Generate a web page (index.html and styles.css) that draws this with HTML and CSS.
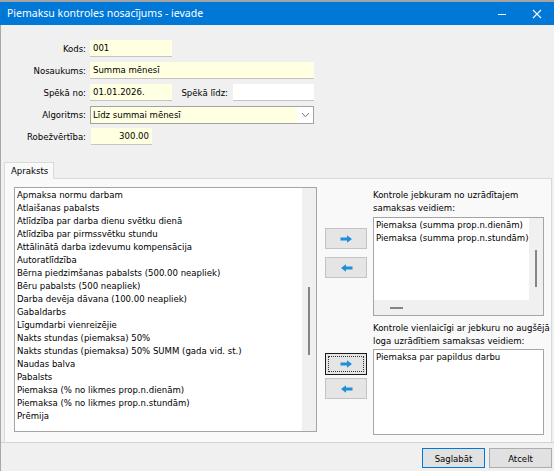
FILE: index.html
```html
<!DOCTYPE html>
<html lang="lv">
<head>
<meta charset="utf-8">
<title>Piemaksu kontroles nosacījums - ievade</title>
<link rel="stylesheet" href="styles.css">
</head>
<body>
<div class="window">
  <div class="titlebar">
    <span class="title">Piemaksu kontroles nosacījums - ievade</span>
    <span class="tb-btn"><svg width="10" height="10" viewBox="0 0 10 10"><path d="M1 5.5H9" stroke="#fff" stroke-width="1"/></svg></span>
    <span class="tb-btn"><svg width="10" height="10" viewBox="0 0 10 10"><path d="M1 1L9 9M9 1L1 9" stroke="#fff" stroke-width="1.1"/></svg></span>
  </div>
  <div class="client">
    <div class="form">
      <div class="lbl">Kods:</div>
      <div class="field"><span class="inp w82">001</span></div>

      <div class="lbl">Nosaukums:</div>
      <div class="field"><span class="inp wfull">Summa mēnesī</span></div>

      <div class="lbl">Spēkā no:</div>
      <div class="field">
        <span class="inp w82">01.01.2026.</span>
        <span class="lbl2">Spēkā līdz:</span>
        <span class="inp w81 white"></span>
      </div>

      <div class="lbl">Algoritms:</div>
      <div class="field">
        <span class="select">
          <span class="sel-text">Līdz summai mēnesī</span>
          <span class="sel-arrow"><svg width="9" height="6" viewBox="0 0 9 6"><path d="M1 1.2L4.5 4.6L8 1.2" fill="none" stroke="#6d6d6d" stroke-width="1"/></svg></span>
        </span>
      </div>

      <div class="lbl">Robežvērtība:</div>
      <div class="field"><span class="inp w61 num">300.00</span></div>
    </div>

    <div class="tabs"><div class="tab">Apraksts</div></div>

    <div class="panel">
      <div class="listbox big">
        <ul class="items">
          <li>Apmaksa normu darbam</li>
          <li>Atlaišanas pabalsts</li>
          <li>Atlīdzība par darba dienu svētku dienā</li>
          <li>Atlīdzība par pirmssvētku stundu</li>
          <li>Attālinātā darba izdevumu kompensācija</li>
          <li>Autoratlīdzība</li>
          <li>Bērna piedzimšanas pabalsts (500.00 neapliek)</li>
          <li>Bēru pabalsts (500 neapliek)</li>
          <li>Darba devēja dāvana (100.00 neapliek)</li>
          <li>Gabaldarbs</li>
          <li>Līgumdarbi vienreizējie</li>
          <li>Nakts stundas (piemaksa) 50%</li>
          <li>Nakts stundas (piemaksa) 50% SUMM (gada vid. st.)</li>
          <li>Naudas balva</li>
          <li>Pabalsts</li>
          <li>Piemaksa (% no likmes prop.n.dienām)</li>
          <li>Piemaksa (% no likmes prop.n.stundām)</li>
          <li>Prēmija</li>
        </ul>
        <div class="vscroll"><span class="vthumb t1"></span></div>
      </div>

      <div class="mid">
        <div class="group g1">
          <button class="abtn"><svg width="13" height="8" viewBox="0 0 13 8"><path d="M0.5 2.6H7V0.3L12 4L7 7.7V5.4H0.5Z" fill="#1e8fd8"/></svg></button>
          <button class="abtn gap9"><svg width="13" height="8" viewBox="0 0 13 8"><path d="M12.5 2.6H6V0.3L1 4L6 7.7V5.4H12.5Z" fill="#1e8fd8"/></svg></button>
        </div>
        <div class="group g2">
          <button class="abtn focused"><span class="focus-rect"><svg width="13" height="8" viewBox="0 0 13 8"><path d="M0.5 2.6H7V0.3L12 4L7 7.7V5.4H0.5Z" fill="#1e8fd8"/></svg></span></button>
          <button class="abtn gap2"><svg width="13" height="8" viewBox="0 0 13 8"><path d="M12.5 2.6H6V0.3L1 4L6 7.7V5.4H12.5Z" fill="#1e8fd8"/></svg></button>
        </div>
      </div>

      <div class="right">
        <div class="cap c1">Kontrole jebkuram no uzrādītajem<br>samaksas veidiem:</div>
        <div class="listbox top">
          <div class="lb-main">
            <ul class="items">
              <li>Piemaksa (summa prop.n.dienām)</li>
              <li>Piemaksa (summa prop.n.stundām)</li>
            </ul>
            <div class="vscroll"><span class="vthumb t2"></span></div>
          </div>
          <div class="hscroll"><span class="hthumb"></span></div>
        </div>
        <div class="cap c2">Kontrole vienlaicīgi ar jebkuru no augšējā<br>loga uzrādītiem samaksas veidiem:</div>
        <div class="listbox bottom">
          <ul class="items">
            <li>Piemaksa par papildus darbu</li>
          </ul>
        </div>
      </div>
    </div>

    <div class="footer">
      <button class="btn default">Saglabāt</button>
      <button class="btn">Atcelt</button>
    </div>
  </div>
</div>
</body>
</html>
```
FILE: styles.css
```css
* { box-sizing: border-box; }
html, body { margin: 0; padding: 0; }
body {
  background: #f0f0f0;
  font-family: "DejaVu Sans Condensed", "DejaVu Sans", sans-serif;
  font-stretch: condensed;
  font-size: 9.5px;
  line-height: 13px;
  color: #000;
}
.window {
  width: 554px;
  height: 471px;
  display: flex;
  flex-direction: column;
  background: #f0f0f0;
  overflow: hidden;
}
.titlebar {
  height: 25px;
  border-top: 2px solid #a3a3a3;
  background: #0078d7;
  display: flex;
  align-items: center;
  color: #fff;
  font-family: "Noto Sans", sans-serif;
  font-stretch: normal;
  font-size: 10.5px;
  padding-left: 7px;
}
.title { flex: 1; padding-bottom: 1px; }
.tb-btn {
  width: 35px;
  height: 23px;
  display: flex;
  align-items: center;
  justify-content: center;
}
.client {
  flex: 1;
  display: flex;
  flex-direction: column;
  border-left: 1px solid #a8a8a8;
}
.form {
  display: grid;
  grid-template-columns: 80px 224px;
  column-gap: 4px;
  row-gap: 5px;
  padding: 15px 0 0 5px;
}
.lbl {
  height: 17px;
  line-height: 17px;
  text-align: right;
  white-space: nowrap;
}
.field {
  height: 17px;
  display: flex;
  align-items: stretch;
}
.inp {
  display: block;
  height: 17px;
  line-height: 16px;
  background: #ffffe1;
  border-bottom: 1px solid #c4c4c4;
  padding-left: 3px;
  white-space: nowrap;
}
.inp.white { background: #fff; }
.w82 { width: 82px; }
.w81 { width: 81px; }
.w61 { width: 61px; margin-left: 1px; }
.wfull { width: 224px; }
.num { text-align: right; padding-right: 3px; }
.lbl2 {
  flex: 1;
  text-align: right;
  padding-right: 5px;
  line-height: 17px;
}
.select {
  width: 224px;
  height: 18px;
  border: 1px solid #a2a2a2;
  background: #fff;
  display: flex;
}
.sel-text {
  flex: 1;
  background: #ffffe1;
  padding-left: 2px;
  line-height: 15px;
}
.sel-arrow {
  width: 16px;
  display: flex;
  align-items: center;
  justify-content: center;
}
.tabs {
  margin-top: 17px;
  padding-left: 3px;
  display: flex;
}
.tab {
  height: 17px;
  padding: 0 5px 0 6px;
  line-height: 15px;
  background: #f9f9f9;
  border: 1px solid #d9d9d9;
  border-bottom: none;
  position: relative;
  margin-bottom: -1px;
  z-index: 1;
}
.panel {
  flex: 1;
  margin: 0 2px 0 3px;
  border: 1px solid #d9d9d9;
  border-bottom: none;
  background: #f9f9f9;
  display: flex;
  align-items: flex-start;
  padding: 8px 7px 0 9px;
}
.listbox {
  background: #fff;
  border: 1px solid #a5a5a5;
  display: flex;
}
.listbox.big { width: 303px; height: 245px; }
.items {
  list-style: none;
  margin: 0;
  padding: 0 0 0 2px;
  flex: 1;
  white-space: nowrap;
  overflow: hidden;
}
.items li { height: 13px; }
.vscroll {
  width: 14px;
  background: #f0f0f0;
  display: flex;
  justify-content: center;
}
.vthumb {
  display: block;
  width: 2px;
  background: #858585;
}
.t1 { margin-top: 99px; height: 68px; }
.t2 { margin-top: 32px; height: 37px; }
.mid {
  width: 42px;
  margin-left: 8px;
  display: flex;
  flex-direction: column;
}
.group { display: flex; flex-direction: column; }
.g1 { margin-top: 41px; }
.g2 { margin-top: 75px; }
.abtn {
  width: 42px;
  height: 21px;
  padding: 0;
  margin: 0;
  background: #e5e5e5;
  border: 1px solid #c3c3c3;
  display: flex;
  align-items: center;
  justify-content: center;
  font: inherit;
}
.gap9 { margin-top: 8px; }
.gap2 { margin-top: 3px; }
.abtn.focused {
  height: 22px;
  border: 1px solid #1a1a1a;
  padding: 2px;
  background: #e5e5e5;
}
.focus-rect {
  flex: 1;
  align-self: stretch;
  border: 1px dotted #333;
  display: flex;
  align-items: center;
  justify-content: center;
}
.right {
  width: 171px;
  margin-left: 6px;
  display: flex;
  flex-direction: column;
}
.cap { line-height: 12.5px; white-space: nowrap; }
.c1 { margin-top: 2px; }
.c2 { margin-top: 6px; }
.listbox.top {
  margin-top: 3px;
  height: 99px;
  flex-direction: column;
}
.lb-main { flex: 1; display: flex; }
.hscroll {
  height: 15px;
  background: #f0f0f0;
  display: flex;
  align-items: center;
}
.hthumb {
  display: block;
  height: 2px;
  width: 13px;
  margin-left: 16px;
  background: #858585;
}
.listbox.bottom {
  margin-top: 2px;
  height: 86px;
}
.footer {
  height: 29px;
  border-top: 1px solid #d2d2d2;
  display: flex;
  justify-content: flex-end;
  gap: 4px;
  padding: 5px 2px 0 0;
}
.btn {
  width: 63px;
  height: 20px;
  margin: 0;
  padding: 0;
  font: inherit;
  color: #000;
  background: #e1e1e1;
  border: 1px solid #adadad;
}
.btn.default { border-color: #0078d7; }
```
